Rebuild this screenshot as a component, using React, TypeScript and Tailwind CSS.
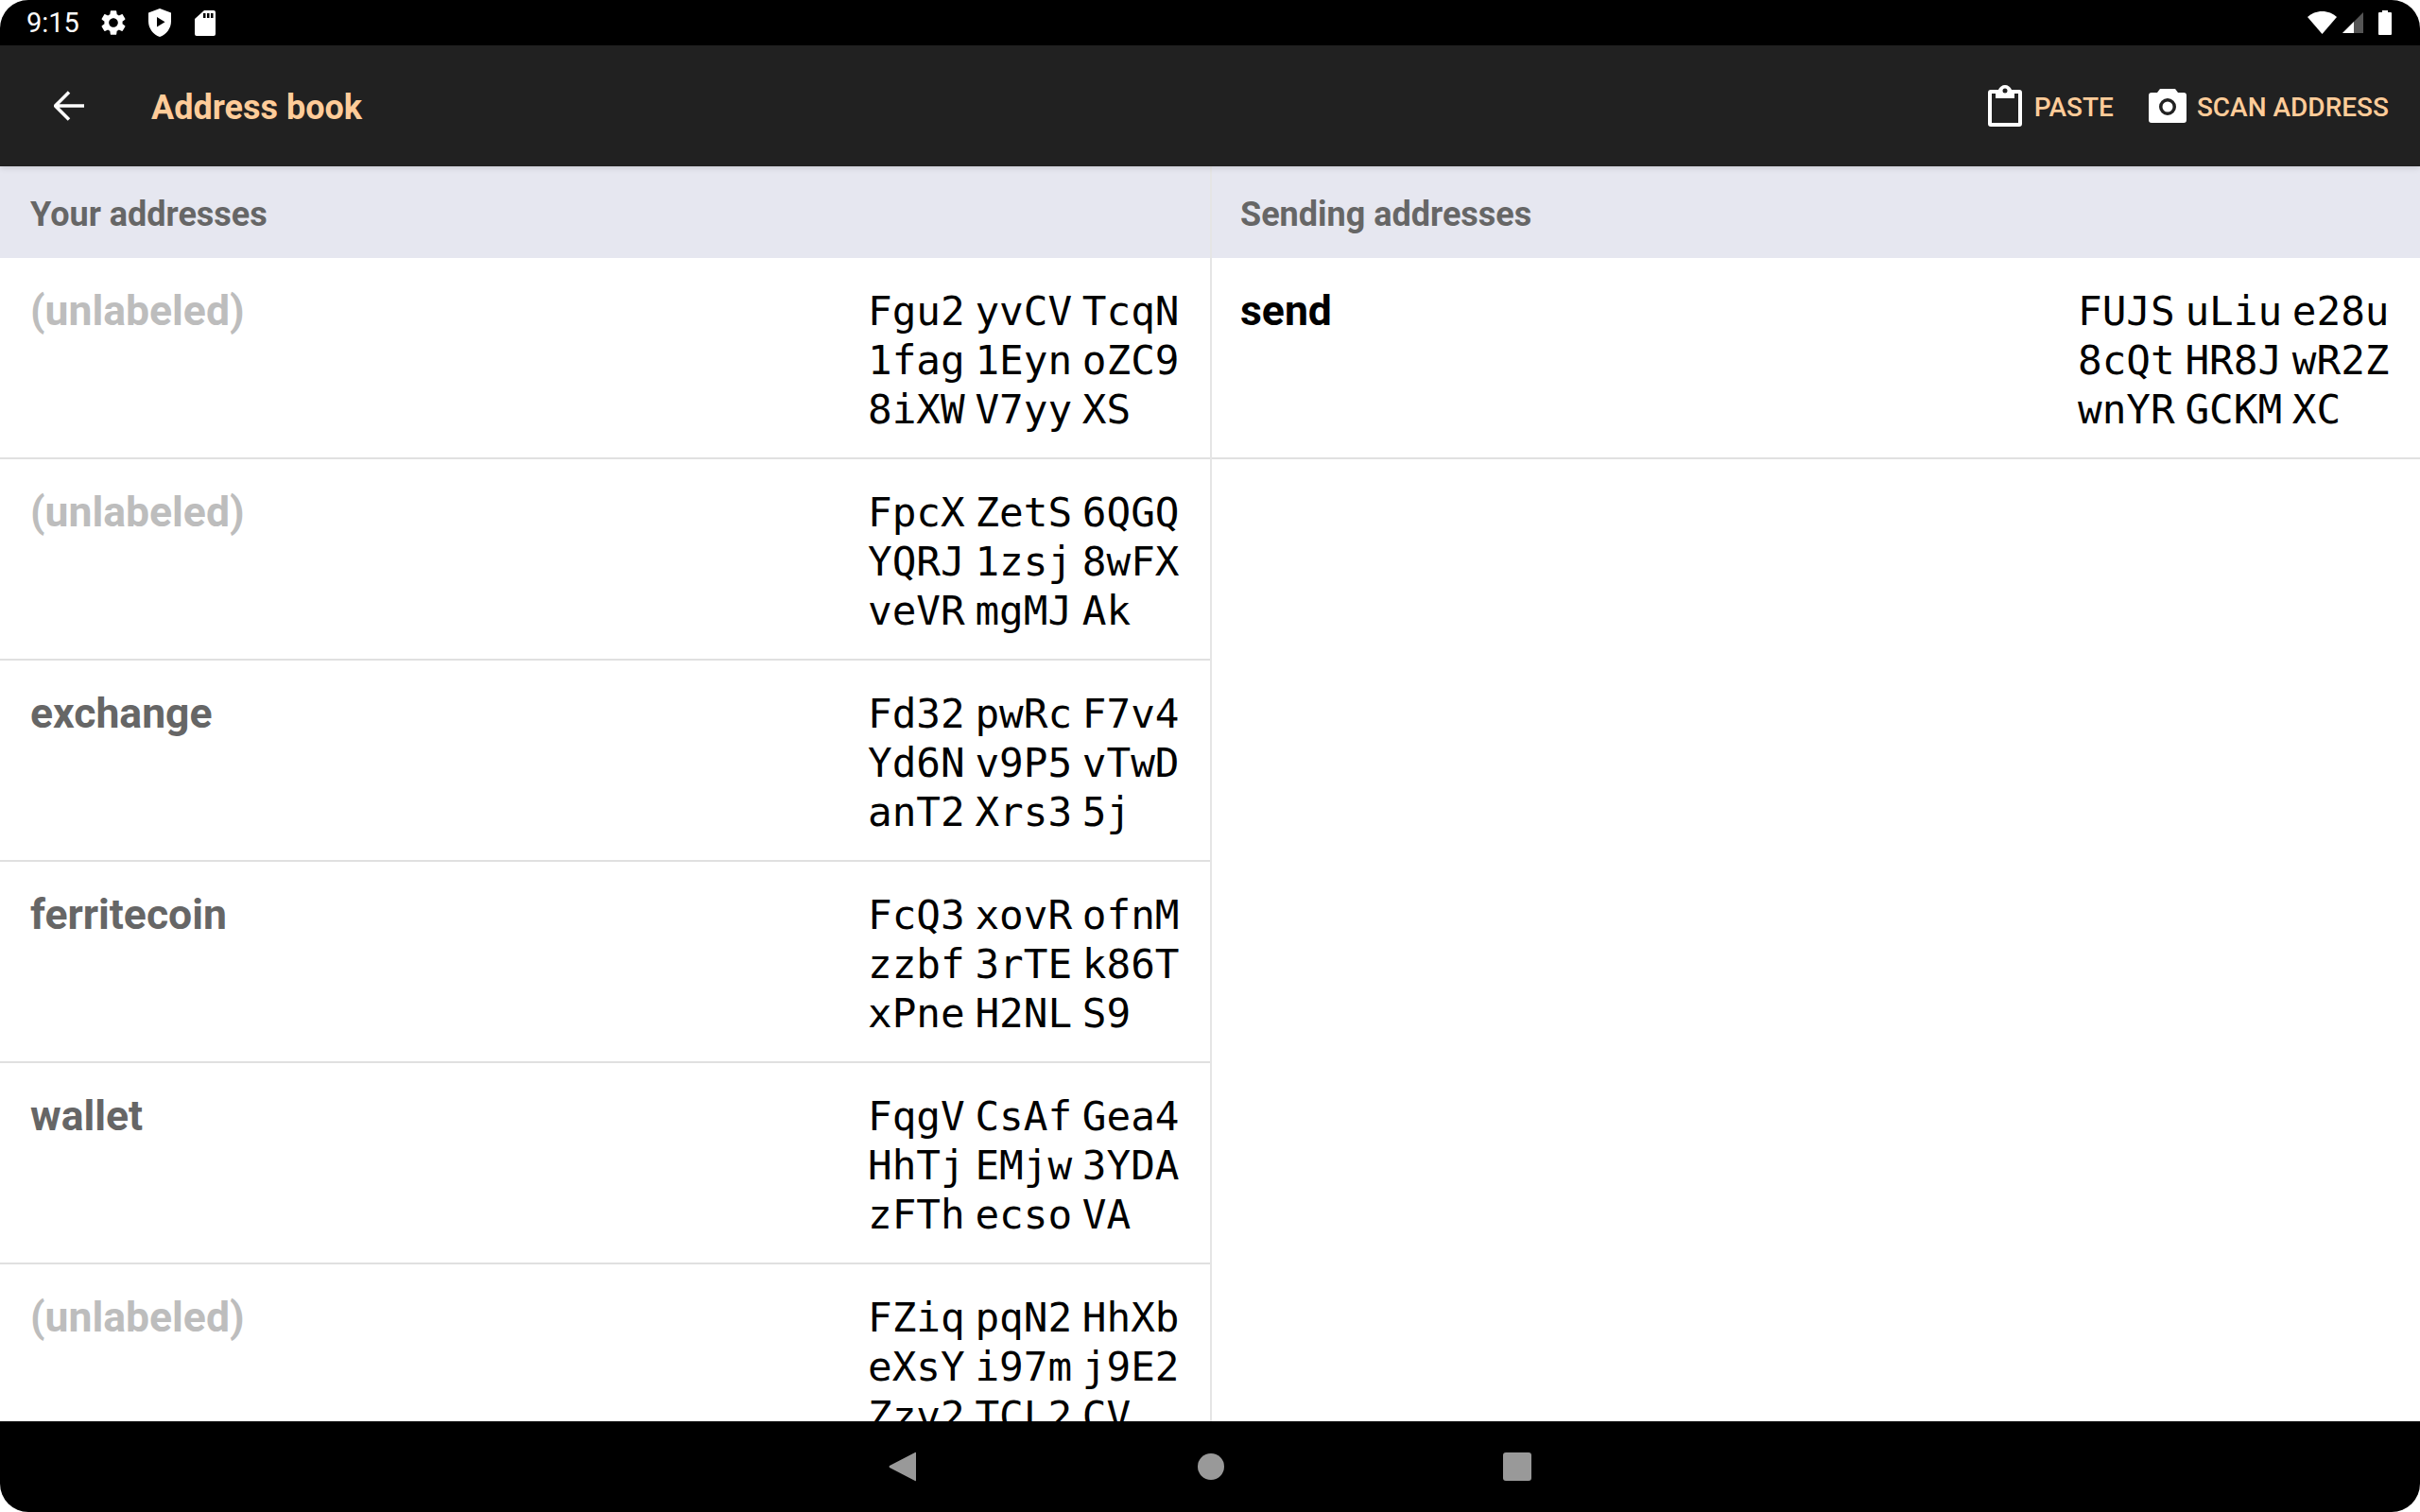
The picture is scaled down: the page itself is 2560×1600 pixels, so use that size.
import React from "react";

const yourAddresses = [
  { label: "(unlabeled)", muted: true, lines: ["Fgu2 yvCV TcqN", "1fag 1Eyn oZC9", "8iXW V7yy XS"] },
  { label: "(unlabeled)", muted: true, lines: ["FpcX ZetS 6QGQ", "YQRJ 1zsj 8wFX", "veVR mgMJ Ak"] },
  { label: "exchange", muted: false, lines: ["Fd32 pwRc F7v4", "Yd6N v9P5 vTwD", "anT2 Xrs3 5j"] },
  { label: "ferritecoin", muted: false, lines: ["FcQ3 xovR ofnM", "zzbf 3rTE k86T", "xPne H2NL S9"] },
  { label: "wallet", muted: false, lines: ["FqgV CsAf Gea4", "HhTj EMjw 3YDA", "zFTh ecso VA"] },
  { label: "(unlabeled)", muted: true, lines: ["FZiq pqN2 HhXb", "eXsY i97m j9E2", "Zzv2 TCL2 CV"] },
];

const AddressLines = ({ lines }: { lines: string[] }) => (
  <div className="font-['DejaVu_Sans_Mono',monospace] text-[42.67px] leading-[52px] text-black whitespace-pre [word-spacing:-15px] w-[330px]">
    {lines.map((line) => (
      <div key={line}>{line}</div>
    ))}
  </div>
);

const Row = ({ label, labelClass, lines, pad }: { label: string; labelClass: string; lines: string[]; pad: string }) => (
  <div className={`flex justify-between h-[213px] shrink-0 pr-8 pt-[30px] border-b-2 border-[#e0e0e0] ${pad}`}>
    <div className={`text-[44.5px] leading-[52px] font-bold ${labelClass}`}>{label}</div>
    <AddressLines lines={lines} />
  </div>
);

const SectionHeader = ({ title, pad }: { title: string; pad: string }) => (
  <div className={`h-[97px] shrink-0 bg-[#e6e7f0] pt-[5px] flex items-center text-[36px] font-bold text-[#666666] ${pad}`}>
    {title}
  </div>
);

export default function App() {
  return (
    <div className="w-[2560px] h-[1600px] rounded-[30px] overflow-hidden flex flex-col bg-white font-['Roboto',sans-serif]">
      {/* status bar */}
      <div className="h-[48px] shrink-0 bg-black flex items-center pl-[28px] pr-[30px] text-white">
        <span className="text-[29px] leading-none w-[76px]">9:15</span>
        <svg viewBox="0 0 24 24" className="w-[32px] h-[32px]" fill="#fff">
          <path d="M19.14 12.94c.04-.3.06-.61.06-.94 0-.32-.02-.64-.07-.94l2.03-1.58c.18-.14.23-.41.12-.61l-1.92-3.32c-.12-.22-.37-.29-.59-.22l-2.39.96c-.5-.38-1.03-.7-1.62-.94l-.36-2.54c-.04-.24-.24-.41-.48-.41h-3.84c-.24 0-.43.17-.47.41l-.36 2.54c-.59.24-1.13.57-1.62.94l-2.39-.96c-.22-.08-.47 0-.59.22L2.74 8.87c-.12.21-.08.47.12.61l2.03 1.58c-.05.3-.09.63-.09.94s.02.64.07.94l-2.03 1.58c-.18.14-.23.41-.12.61l1.92 3.32c.12.22.37.29.59.22l2.39-.96c.5.38 1.03.7 1.62.94l.36 2.54c.05.24.24.41.48.41h3.84c.24 0 .44-.17.47-.41l.36-2.54c.59-.24 1.13-.56 1.62-.94l2.39.96c.22.08.47 0 .59-.22l1.92-3.32c.12-.22.07-.47-.12-.61l-2.01-1.58zM12 15.6c-1.98 0-3.6-1.62-3.6-3.6s1.62-3.6 3.6-3.6 3.6 1.62 3.6 3.6-1.62 3.6-3.6 3.6z" />
        </svg>
        <svg viewBox="0 0 24 30" className="w-[24px] h-[30px] ml-[21px]" fill="#fff">
          <path fillRule="evenodd" d="M12 0 L24 4.5 V13.5 C24 21 19 27.5 12 30 C5 27.5 0 21 0 13.5 V4.5 Z M9 9 V19.5 L17.5 14.2 Z" />
        </svg>
        <svg viewBox="0 0 22 27" className="w-[22px] h-[27px] ml-[25px]" fill="#fff">
          <path fillRule="evenodd" d="M10 0 H20 Q22 0 22 2 V25 Q22 27 20 27 H2 Q0 27 0 25 V9 Z M9 3 V8 H11.5 V3 Z M13 3 V8 H15.5 V3 Z M17 3 V8 H19.5 V3 Z" />
        </svg>
        <div className="flex-1" />
        <svg viewBox="0 0 31 24" className="w-[31px] h-[24px]" fill="#fff">
          <path d="M15.5 24 L0 6 C4 2.2 9.5 0 15.5 0 S27 2.2 31 6 Z" />
        </svg>
        <svg viewBox="0 0 22 22" className="w-[22px] h-[22px] ml-[6px]">
          <path d="M22 0 V22 H0 Z" fill="#555" />
          <path d="M12 10 V22 H0 Z" fill="#fff" />
        </svg>
        <svg viewBox="0 0 14 26" className="w-[14px] h-[26px] ml-[16px]" fill="#fff">
          <path d="M4 0 H10 V2 H13 Q14 2 14 3 V25 Q14 26 13 26 H1 Q0 26 0 25 V3 Q0 2 1 2 H4 Z" />
        </svg>
      </div>

      {/* toolbar */}
      <div className="relative z-10 h-[128px] shrink-0 bg-[#212121] shadow-[0_2px_6px_rgba(0,0,0,0.12)] flex items-center pl-[57px] pr-[33px]">
        <svg viewBox="0 0 32 32" className="w-[32px] h-[32px]" fill="none" stroke="#fff" strokeWidth="3.5">
          <path d="M32 16 H2 M16 1.5 L1.5 16 L16 30.5" />
        </svg>
        <span className="ml-[71px] pt-[4px] text-[36px] font-bold text-[#ffcc99]">Address book</span>
        <div className="flex-1" />
        <svg viewBox="0 0 36 44" className="w-[36px] h-[44px]">
          <path fillRule="evenodd" fill="#fff" d="M3 5 H11 C12 2 15 0 18 0 S24 2 25 5 H33 Q36 5 36 8 V41 Q36 44 33 44 H3 Q0 44 0 41 V8 Q0 5 3 5 Z M4 9 V40 H32 V9 H28 V14 H8 V9 Z M18 3.5 A2.5 2.5 0 1 0 18 8.5 A2.5 2.5 0 1 0 18 3.5 Z" />
        </svg>
        <span className="ml-[13px] pt-[3px] text-[28px] font-medium text-[#ffcc99]">PASTE</span>
        <svg viewBox="0 0 40 36" className="w-[40px] h-[36px] ml-[37px]">
          <path fillRule="evenodd" fill="#fff" d="M12 0 H28 L31 4 H37 Q40 4 40 7 V33 Q40 36 37 36 H3 Q0 36 0 33 V7 Q0 4 3 4 H9 Z M20 10 A9 9 0 1 0 20 28 A9 9 0 1 0 20 10 Z" />
          <circle cx="20" cy="19" r="5.5" fill="#fff" />
        </svg>
        <span className="ml-[11px] pt-[3px] text-[28px] font-medium text-[#ffcc99]">SCAN ADDRESS</span>
      </div>

      {/* the two address lists */}
      <div className="flex-1 flex min-h-0 overflow-hidden">
        <div className="w-[1280px] shrink-0 flex flex-col">
          <SectionHeader title="Your addresses" pad="pl-8" />
          {yourAddresses.map((a, i) => (
            <Row key={i} pad="pl-8" label={a.label} labelClass={a.muted ? "text-[#bdbdbd]" : "text-[#666666]"} lines={a.lines} />
          ))}
        </div>
        <div className="flex-1 flex flex-col border-l-2 border-black/10">
          <SectionHeader title="Sending addresses" pad="pl-[30px]" />
          <Row pad="pl-[30px]" label="send" labelClass="text-black" lines={["FUJS uLiu e28u", "8cQt HR8J wR2Z", "wnYR GCKM XC"]} />
        </div>
      </div>

      {/* nav bar */}
      <div className="h-[96px] shrink-0 bg-black flex items-center justify-center">
        <svg viewBox="0 0 29 32" className="w-[29px] h-[32px]" fill="#999">
          <path d="M28 1 Q29 0 29 2 V30 Q29 32 28 31 L1 17 Q0 16 1 15 Z" />
        </svg>
        <div className="w-[28px] h-[28px] rounded-full bg-[#999] ml-[298px]" />
        <div className="w-[30px] h-[30px] rounded-[3px] bg-[#999] ml-[295px]" />
      </div>
    </div>
  );
}
